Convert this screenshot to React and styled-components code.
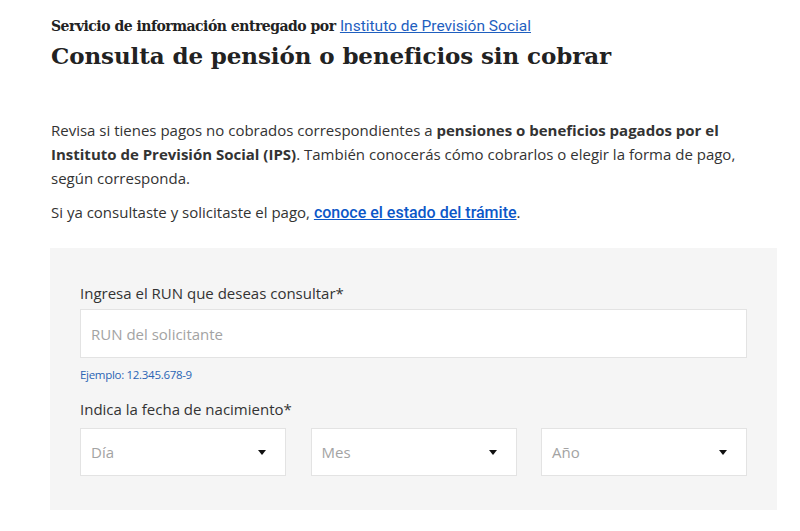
import React from "react";
import styled, { createGlobalStyle } from "styled-components";

const GlobalStyle = createGlobalStyle`
  body {
    margin: 0;
    background: #fff;
    font-family: "Open Sans", sans-serif;
    color: #333;
  }
`;

const Page = styled.main`
  padding: 16px 23px 0 50px;
`;

const Intro = styled.section`
  padding-left: 1px;
`;

const Provider = styled.p`
  margin: 0;
  font-family: "DejaVu Serif", serif;
  font-size: 14px;
  font-weight: 700;
  line-height: 20px;
  color: #222;
  letter-spacing: -0.5px;

  a {
    font-family: Roboto, sans-serif;
    font-weight: 400;
    font-size: 15.5px;
    letter-spacing: 0;
    color: #1f5fbf;
    text-decoration: underline;
  }
`;

const Title = styled.h1`
  margin: 2px 0 0;
  font-family: "DejaVu Serif", serif;
  font-size: 23px;
  font-weight: 700;
  line-height: 36px;
  color: #222;
  letter-spacing: -0.1px;
`;

const Text = styled.p`
  margin: ${(p) => p.$top || 0}px 0 0;
  max-width: 712px;
  font-size: 15px;
  line-height: 24px;
  color: #333;

  b {
    font-weight: 700;
  }

  a {
    font-family: Roboto, sans-serif;
    font-size: 16px;
    font-weight: 500;
    color: #0b57c8;
    text-decoration: underline;
  }
`;

const Panel = styled.form`
  margin-top: 23px;
  background: #f5f5f5;
  padding: 35px 30px 34px;
  display: flex;
  flex-direction: column;
`;

const Label = styled.label`
  font-size: 15px;
  line-height: 20px;
  color: #333;
  margin-bottom: ${(p) => p.$gap}px;
`;

const Field = styled.div`
  height: 49px;
  box-sizing: border-box;
  background: #fff;
  border: 1px solid #e3e3e3;
  display: flex;
  align-items: center;
  padding: 0 10px;
  font-size: 15px;
  color: #a3a3a3;
`;

const Hint = styled.span`
  margin: 9px 0 16px;
  font-size: 11.5px;
  line-height: 16px;
  color: #2a64b4;
  letter-spacing: -0.3px;
`;

const DateRow = styled.div`
  display: grid;
  grid-template-columns: repeat(3, 206px);
  justify-content: space-between;
`;

const Select = styled(Field)`
  height: 48px;
  justify-content: space-between;
  padding: 0 19px 0 10px;
`;

const Caret = styled.span`
  width: 0;
  height: 0;
  border-left: 4px solid transparent;
  border-right: 4px solid transparent;
  border-top: 5px solid #111;
`;

export default function App() {
  return (
    <>
      <GlobalStyle />
      <Page>
        <Intro>
          <Provider>
            Servicio de información entregado por{" "}
            <a href="#">Instituto de Previsión Social</a>
          </Provider>
          <Title>Consulta de pensión o beneficios sin cobrar</Title>
          <Text $top={44}>
            Revisa si tienes pagos no cobrados correspondientes a{" "}
            <b>pensiones o beneficios pagados por el Instituto de Previsión Social (IPS)</b>.
            También conocerás cómo cobrarlos o elegir la forma de pago, según corresponda.
          </Text>
          <Text $top={10}>
            Si ya consultaste y solicitaste el pago,{" "}
            <a href="#">conoce el estado del trámite</a>.
          </Text>
        </Intro>
        <Panel>
          <Label $gap={6}>Ingresa el RUN que deseas consultar*</Label>
          <Field>RUN del solicitante</Field>
          <Hint>Ejemplo: 12.345.678-9</Hint>
          <Label $gap={9}>Indica la fecha de nacimiento*</Label>
          <DateRow>
            {["Día", "Mes", "Año"].map((t) => (
              <Select key={t}>
                {t}
                <Caret />
              </Select>
            ))}
          </DateRow>
        </Panel>
      </Page>
    </>
  );
}
